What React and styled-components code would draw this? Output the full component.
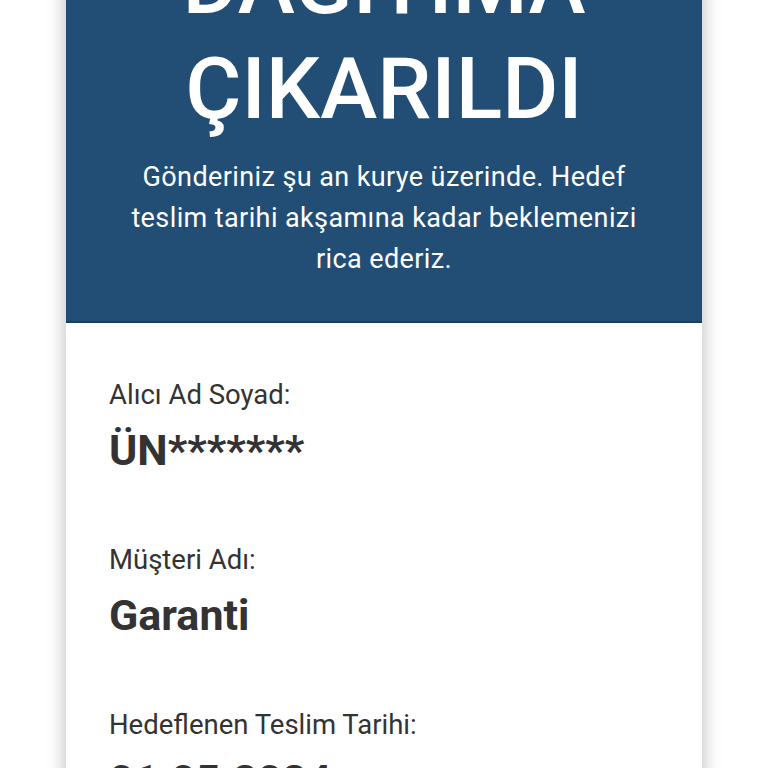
import React from "react";
import styled, { createGlobalStyle } from "styled-components";

const GlobalStyle = createGlobalStyle`
    html, body {
        margin: 0;
        padding: 0;
        background-color: #ffffff;
        font-family: Roboto, "Noto Sans", "Liberation Sans", sans-serif;
    }
`;

const Card = styled.div`
    width: 636px;
    margin: -109px auto 0;
    background-color: #ffffff;
    box-shadow: 0 0 18px rgba(0, 0, 0, 0.28);
`;

const Header = styled.div`
    background-color: #224e76;
    border-bottom: 2px solid #1b3f60;
    padding: 40px 50px 41px;
    text-align: center;
    color: #ffffff;
`;

const Title = styled.h1`
    margin: 0;
    font-size: 86px;
    line-height: 105px;
    font-weight: 500;
    letter-spacing: 0;
`;

const Subtitle = styled.p`
    margin: 16px 0 0;
    font-size: 27px;
    line-height: 41px;
    font-weight: 400;
    letter-spacing: 0.4px;
`;

const Body = styled.div`
    padding: 54px 43px 40px;
    display: flex;
    flex-direction: column;
    gap: 64px;
    color: #333333;
`;

const Field = styled.div`
    display: flex;
    flex-direction: column;
    gap: 9px;
`;

const Label = styled.div`
    font-size: 27.5px;
    line-height: 36px;
    font-weight: 400;
`;

const Value = styled.div`
    font-size: 43px;
    line-height: 56px;
    font-weight: 700;
`;

const fields = [
    { label: "Alıcı Ad Soyad:", value: "ÜN*******" },
    { label: "Müşteri Adı:", value: "Garanti" },
    { label: "Hedeflenen Teslim Tarihi:", value: "01.05.2024" },
];

const App = () => {
    return (
        <>
            <GlobalStyle />
            <Card>
                <Header>
                    <Title>
                        DAĞITIMA
                        <br />
                        ÇIKARILDI
                    </Title>
                    <Subtitle>
                        Gönderiniz şu an kurye üzerinde. Hedef teslim tarihi
                        akşamına kadar beklemenizi rica ederiz.
                    </Subtitle>
                </Header>
                <Body>
                    {fields.map((f) => (
                        <Field key={f.label}>
                            <Label>{f.label}</Label>
                            <Value>{f.value}</Value>
                        </Field>
                    ))}
                </Body>
            </Card>
        </>
    );
};

export default App;
